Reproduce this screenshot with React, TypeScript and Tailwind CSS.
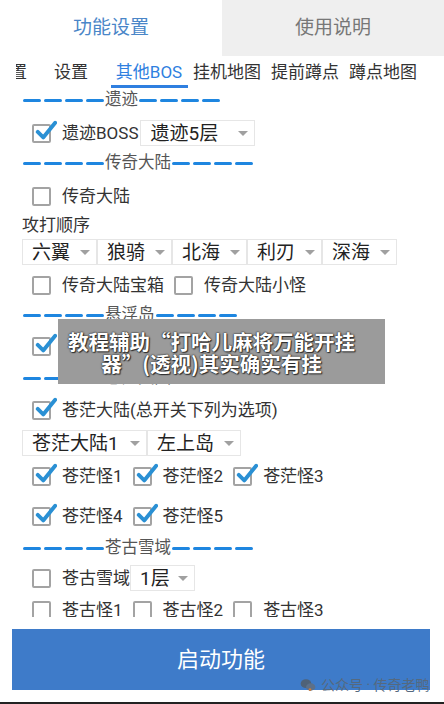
import React from "react";

const FONT = "font-['Roboto','Noto_Sans_CJK_SC',sans-serif]";

function CheckBox({ checked }: { checked?: boolean }) {
  return (
    <span className="relative inline-block w-[19px] h-[19px] shrink-0 border-2 border-[#a3a3a3] rounded-[2px] bg-white">
      {checked && (
        <svg viewBox="0 0 24 24" className="absolute left-[1px] top-[-6px] w-[22px] h-[22px]">
          <path d="M3 13 L9 19 L22 3" fill="none" stroke="#2a90d4" strokeWidth="4.2" strokeLinecap="round" strokeLinejoin="round" />
        </svg>
      )}
    </span>
  );
}

function Check({ label, checked, gap = "ml-[10px]" }: { label: string; checked?: boolean; gap?: string }) {
  return (
    <div className={`flex items-center ${gap}`}>
      <CheckBox checked={checked} />
      <span className="ml-[11px] text-[17px] text-[#333] leading-none whitespace-nowrap">{label}</span>
    </div>
  );
}

function Spinner({ value, width }: { value: string; width: string }) {
  return (
    <div className={`relative flex items-center h-[26px] shrink-0 border border-[#e6e6e6] bg-white pl-[9px] ${width}`}>
      <span className="text-[19px] text-[#222] leading-none whitespace-nowrap">{value}</span>
      <span className="absolute right-[6px] top-[10px] w-0 h-0 border-l-[5px] border-r-[5px] border-t-[5px] border-l-transparent border-r-transparent border-t-[#a0a0a0]" />
    </div>
  );
}

function Dashes() {
  return (
    <div className="flex gap-[3px]">
      {[0, 1, 2, 3].map((i) => (
        <span key={i} className="w-[18px] h-[3px] rounded-full bg-[#1e86e0]" />
      ))}
    </div>
  );
}

function Heading({ title, mt }: { title: string; mt: string }) {
  return (
    <div className={`flex items-center h-[20px] shrink-0 pl-[23px] ${mt}`}>
      <Dashes />
      <span className="px-[1px] text-[16.5px] text-[#555] leading-none">{title}</span>
      <Dashes />
    </div>
  );
}

export default function App() {
  const subTabs = ["基本设置", "设置", "其他BOS", "挂机地图", "提前蹲点", "蹲点地图"];
  const row = "flex items-center h-[26px] shrink-0 pl-[22px]";

  return (
    <div className={`relative w-[444px] h-[704px] bg-white overflow-hidden flex flex-col ${FONT}`}>
      {/* top tabs */}
      <div className="flex h-[56px] shrink-0">
        <div className="w-[222px] flex items-center justify-center text-[19px] text-[#4a86c8]">功能设置</div>
        <div className="flex-1 flex items-center justify-center bg-[#efefef] text-[19px] text-[#777]">使用说明</div>
      </div>

      {/* sub tabs */}
      <div className="ml-[16px] h-[32px] shrink-0 overflow-hidden">
        <div className="flex -ml-[62px] h-full">
          {subTabs.map((t) => {
            const active = t === "其他BOS";
            return (
              <div key={t} className="relative w-[78px] shrink-0 flex items-center justify-center">
                <span className={`text-[17px] leading-none whitespace-nowrap ${active ? "text-[#2f7fe0]" : "text-[#333]"}`}>{t}</span>
                {active && <span className="absolute left-[1px] right-0 bottom-0 h-[3px] bg-[#2f7fe0]" />}
              </div>
            );
          })}
        </div>
      </div>

      {/* scroll content */}
      <div className="h-[529px] shrink-0 overflow-hidden flex flex-col">
        <Heading title="遗迹" mt="mt-[2px]" />
        <div className={`${row} mt-[10px]`}>
          <Check label="遗迹BOSS" checked />
          <div className="ml-[2px]">
            <Spinner value="遗迹5层" width="w-[115px]" />
          </div>
        </div>

        <Heading title="传奇大陆" mt="mt-[7px]" />
        <div className={`${row} mt-[10px]`}>
          <Check label="传奇大陆" />
        </div>

        <div className="flex items-center h-[20px] shrink-0 mt-[7px] pl-[22px] text-[17px] text-[#333]">攻打顺序</div>
        <div className="flex shrink-0 mt-[3px] pl-[22px]">
          {["六翼", "狼骑", "北海", "利刃", "深海"].map((v) => (
            <Spinner key={v} value={v} width="w-[75px]" />
          ))}
        </div>
        <div className={`${row} mt-[7px]`}>
          <Check label="传奇大陆宝箱" />
          <Check label="传奇大陆小怪" />
        </div>

        <Heading title="悬浮岛" mt="mt-[7px]" />
        <div className={`${row} mt-[8px]`}>
          <Check label="悬浮岛" checked />
        </div>

        <Heading title="苍茫大陆" mt="mt-[9px]" />
        <div className={`${row} mt-[9px]`}>
          <Check label="苍茫大陆(总开关下列为选项)" checked />
        </div>
        <div className="flex shrink-0 mt-[7px] pl-[22px]">
          <Spinner value="苍茫大陆1" width="w-[125px]" />
          <Spinner value="左上岛" width="w-[94px]" />
        </div>
        <div className={`${row} mt-[7px]`}>
          <Check label="苍茫怪1" checked />
          <Check label="苍茫怪2" checked />
          <Check label="苍茫怪3" checked />
        </div>
        <div className={`${row} mt-[14px]`}>
          <Check label="苍茫怪4" checked />
          <Check label="苍茫怪5" checked />
        </div>

        <Heading title="苍古雪域" mt="mt-[9px]" />
        <div className={`${row} mt-[7px]`}>
          <Check label="苍古雪域" />
          <Spinner value="1层" width="w-[65px]" />
        </div>
        <div className={`${row} mt-[6px]`}>
          <Check label="苍古怪1" />
          <Check label="苍古怪2" />
          <Check label="苍古怪3" />
        </div>
      </div>

      {/* start button */}
      <div className="mt-[12px] ml-[12px] w-[418px] h-[61px] shrink-0 bg-[#3e7bc9] flex items-center justify-center">
        <span className="text-[22px] text-white">启动功能</span>
      </div>
      <div className="flex-1" />
      <div className="h-[2px] bg-[#222] shrink-0" />

      {/* watermark */}
      <div className="absolute left-[300px] top-[678px] flex items-center gap-[5px] text-[14px] text-[#55697f] leading-none">
        <svg viewBox="0 0 24 20" className="w-[16px] h-[14px]">
          <ellipse cx="9" cy="8" rx="8" ry="6.5" fill="#4f6278" />
          <ellipse cx="16" cy="13" rx="7" ry="5.5" fill="#5d7089" />
          <circle cx="15" cy="17" r="2" fill="#c77a3a" />
        </svg>
        <span>公众号 · 传奇老鸭</span>
      </div>

      {/* caption overlay */}
      <div className="absolute left-[58px] top-[319px] w-[327px] h-[65px] bg-[#9b9b9b] flex flex-col items-center justify-center pr-[20px] font-['Noto_Sans_CJK_SC',sans-serif]">
        <span className="text-[20.5px] font-bold text-white leading-[22px] whitespace-nowrap [text-shadow:0_0_2px_#222,0_0_1px_#222,1px_1px_1px_#333]">教程辅助“打哈儿麻将万能开挂</span>
        <span className="text-[20.5px] font-bold text-white leading-[22px] whitespace-nowrap [text-shadow:0_0_2px_#222,0_0_1px_#222,1px_1px_1px_#333]">器”(透视)其实确实有挂</span>
      </div>
    </div>
  );
}
